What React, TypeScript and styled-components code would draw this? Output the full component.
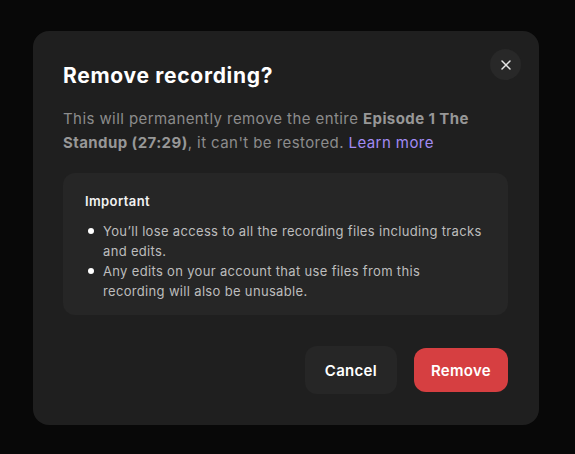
import React from "react";
import styled, { createGlobalStyle } from "styled-components";

const GlobalStyle = createGlobalStyle`
	html, body {
		margin: 0;
		padding: 0;
		background: #080808;
	}
	* {
		box-sizing: border-box;
	}
	body {
		font-family: Inter, "Noto Sans", sans-serif;
		-webkit-font-smoothing: antialiased;
	}
`;

const Backdrop = styled.div`
	width: 575px;
	height: 454px;
	display: flex;
	align-items: flex-start;
	justify-content: flex-start;
	padding: 31px 0 0 33px;
`;

const Dialog = styled.div`
	position: relative;
	width: 506px;
	height: 394px;
	background: #1f1f1f;
	border-radius: 16px;
	padding: 31px 31px 31px 30px;
	display: flex;
	flex-direction: column;
`;

const Title = styled.h2`
	margin: 0;
	font-size: 21px;
	line-height: 28px;
	font-weight: 700;
	color: #fff;
	letter-spacing: 0.7px;
`;

const CloseButton = styled.button`
	position: absolute;
	top: 18px;
	right: 18px;
	width: 31px;
	height: 31px;
	border-radius: 50%;
	border: none;
	background: #282828;
	display: flex;
	align-items: center;
	justify-content: center;
	padding: 0;
	cursor: pointer;
`;

const Body = styled.p`
	margin: 17px 0 0;
	font-size: 15px;
	line-height: 24px;
	color: #8c8c8c;
	letter-spacing: 0.42px;
`;

const Strong = styled.b`
	font-weight: 700;
	color: #979797;
`;

const Link = styled.a`
	color: #a28bf4;
	text-decoration: none;
	cursor: pointer;
`;

const Notice = styled.div`
	margin-top: 18px;
	background: #262626;
	border-radius: 12px;
	padding: 19px 25px 14px 22px;
`;

const NoticeTitle = styled.div`
	font-size: 13px;
	line-height: 18px;
	font-weight: 600;
	color: #f2f2f2;
	letter-spacing: 0.4px;
`;

const List = styled.ul`
	margin: 11px 0 0;
	padding: 0;
	list-style: none;
	display: flex;
	flex-direction: column;
`;

const ListItem = styled.li`
	display: flex;
	gap: 9px;
	font-size: 13px;
	line-height: 20px;
	color: #bdbdbd;
	letter-spacing: 0.33px;
	&::before {
		content: "";
		flex: none;
		width: 6px;
		height: 6px;
		border-radius: 50%;
		background: #fff;
		margin: 7px 0 0 3px;
	}
`;

const Actions = styled.div`
	margin-top: auto;
	display: flex;
	justify-content: flex-end;
	align-items: center;
	gap: 17px;
`;

const Button = styled.button<{ $danger?: boolean }>`
	height: ${({ $danger }) => ($danger ? "44px" : "48px")};
	padding: 0 ${({ $danger }) => ($danger ? "17px" : "20px")};
	border: none;
	border-radius: 12px;
	font-family: inherit;
	font-size: 15px;
	font-weight: 600;
	letter-spacing: 0.3px;
	color: #fff;
	background: ${({ $danger }) => ($danger ? "#d63f41" : "#262626")};
	cursor: pointer;
`;

export default function App() {
	return (
		<>
			<GlobalStyle />
			<Backdrop>
				<Dialog>
					<Title>Remove recording?</Title>
					<CloseButton aria-label="Close">
						<svg width="12" height="12" viewBox="0 0 12 12" fill="none">
							<path d="M2 2L10 10M10 2L2 10" stroke="#e6e6e6" strokeWidth="1.5" strokeLinecap="round" />
						</svg>
					</CloseButton>
					<Body>
						This will permanently remove the entire <Strong>Episode 1 The Standup (27:29)</Strong>, it can't be restored. <Link>Learn more</Link>
					</Body>
					<Notice>
						<NoticeTitle>Important</NoticeTitle>
						<List>
							<ListItem>You’ll lose access to all the recording files including tracks and edits.</ListItem>
							<ListItem>Any edits on your account that use files from this recording will also be unusable.</ListItem>
						</List>
					</Notice>
					<Actions>
						<Button>Cancel</Button>
						<Button $danger>Remove</Button>
					</Actions>
				</Dialog>
			</Backdrop>
		</>
	);
}
